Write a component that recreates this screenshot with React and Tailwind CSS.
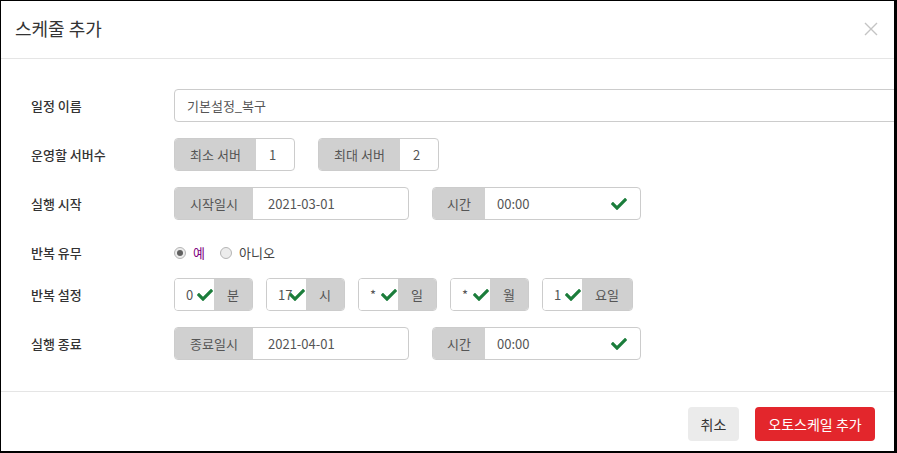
import React from "react";
import { FaCheck } from "react-icons/fa";

const Check = ({ className = "" }) => (
  <FaCheck className={"text-[#1b7d3b] " + className} size={16} />
);

function Label({ children }) {
  return (
    <div className="w-[143px] shrink-0 text-[13px] font-medium text-[#333]">{children}</div>
  );
}

function Group({ addon, addonW, value, width, check = false, valuePad = "pl-[15px]" }) {
  return (
    <div
      className="flex h-[33px] shrink-0 rounded-[4px] border border-[#cccccc] overflow-hidden"
      style={{ width }}
    >
      <div
        className="flex items-center justify-center bg-[#d0d0d0] text-[13px] text-[#555] shrink-0"
        style={{ width: addonW }}
      >
        {addon}
      </div>
      <div className={"flex flex-1 items-center justify-between text-[13px] text-[#555] pr-[13px] " + valuePad}>
        <span>{value}</span>
        {check && <Check />}
      </div>
    </div>
  );
}

function Cron({ value, unit, unitW = "w-[38px]" }) {
  return (
    <div className="flex h-[33px] shrink-0 rounded-[4px] border border-[#cccccc] overflow-hidden">
      <div className="relative w-[39px] flex items-center pl-[11px] text-[13px] text-[#555] bg-white">
        <span>{value}</span>
        <span className="absolute right-[1px] top-[8px]">
          <Check />
        </span>
      </div>
      <div className={"flex items-center justify-center bg-[#d0d0d0] text-[13px] text-[#555] " + unitW}>
        {unit}
      </div>
    </div>
  );
}

function Radio({ checked }) {
  return (
    <span className="flex h-[12px] w-[12px] items-center justify-center rounded-full border border-[#b5b5b5] bg-[#ececec]">
      {checked && <span className="h-[6px] w-[6px] rounded-full bg-[#606060]" />}
    </span>
  );
}

export default function App() {
  return (
    <div className="w-[897px] h-[453px] bg-white border-black border-l border-t border-r-[3px] border-b-2 overflow-hidden flex flex-col font-['Noto_Sans_CJK_KR','Noto_Sans',sans-serif]">
      <div className="h-[58px] shrink-0 border-b border-[#e5e5e5] flex items-center justify-between pl-[14px] pr-[16px]">
        <div className="text-[18px] text-[#333] pb-[2px]">스케줄 추가</div>
        <svg width="14" height="14" viewBox="0 0 14 14" className="mb-[2px]">
          <path d="M1 1 L13 13 M13 1 L1 13" stroke="#c4c4c4" strokeWidth="1.4" fill="none" />
        </svg>
      </div>

      <div className="pt-[30px] pb-[31px] pl-[30px] flex flex-col">
        <div className="flex items-center h-[33px]">
          <Label>일정 이름</Label>
          <div className="h-[33px] w-[760px] shrink-0 rounded-[4px] border border-[#cccccc] flex items-center pl-[12px] text-[13px] text-[#555]">
            기본설정_복구
          </div>
        </div>

        <div className="flex items-center h-[33px] mt-[16px]">
          <Label>운영할 서버수</Label>
          <div className="flex gap-[23px]">
            <Group addon="최소 서버" addonW={81} value="1" width={121} valuePad="pl-[13px]" />
            <Group addon="최대 서버" addonW={81} value="2" width={121} valuePad="pl-[13px]" />
          </div>
        </div>

        <div className="flex items-center h-[33px] mt-[16px]">
          <Label>실행 시작</Label>
          <div className="flex gap-[23px]">
            <Group addon="시작일시" addonW={78} value="2021-03-01" width={235} />
            <Group addon="시간" addonW={52} value="00:00" width={209} check valuePad="pl-[12px]" />
          </div>
        </div>

        <div className="flex items-center h-[33px] mt-[16px]">
          <Label>반복 유무</Label>
          <div className="flex items-center text-[13px]">
            <Radio checked />
            <span className="ml-[7px] text-[#800080]">예</span>
            <span className="ml-[15px]"><Radio /></span>
            <span className="ml-[7px] text-[#444]">아니오</span>
          </div>
        </div>

        <div className="flex items-center h-[33px] mt-[9px]">
          <Label>반복 설정</Label>
          <div className="flex gap-[13px]">
            <Cron value="0" unit="분" />
            <Cron value="17" unit="시" />
            <Cron value="*" unit="일" />
            <Cron value="*" unit="월" />
            <Cron value="1" unit="요일" unitW="w-[50px]" />
          </div>
        </div>

        <div className="flex items-center h-[33px] mt-[16px]">
          <Label>실행 종료</Label>
          <div className="flex gap-[23px]">
            <Group addon="종료일시" addonW={78} value="2021-04-01" width={235} />
            <Group addon="시간" addonW={52} value="00:00" width={209} check valuePad="pl-[12px]" />
          </div>
        </div>
      </div>

      <div className="flex-1 border-t border-[#e5e5e5] flex justify-end items-start pt-[15px] pr-[19px] gap-[16px]">
        <button className="h-[34px] w-[51px] rounded-[4px] bg-[#ebebeb] text-[14px] text-[#333]">취소</button>
        <button className="h-[34px] w-[120px] rounded-[4px] bg-[#e3262c] text-[14px] text-white">오토스케일 추가</button>
      </div>
    </div>
  );
}
